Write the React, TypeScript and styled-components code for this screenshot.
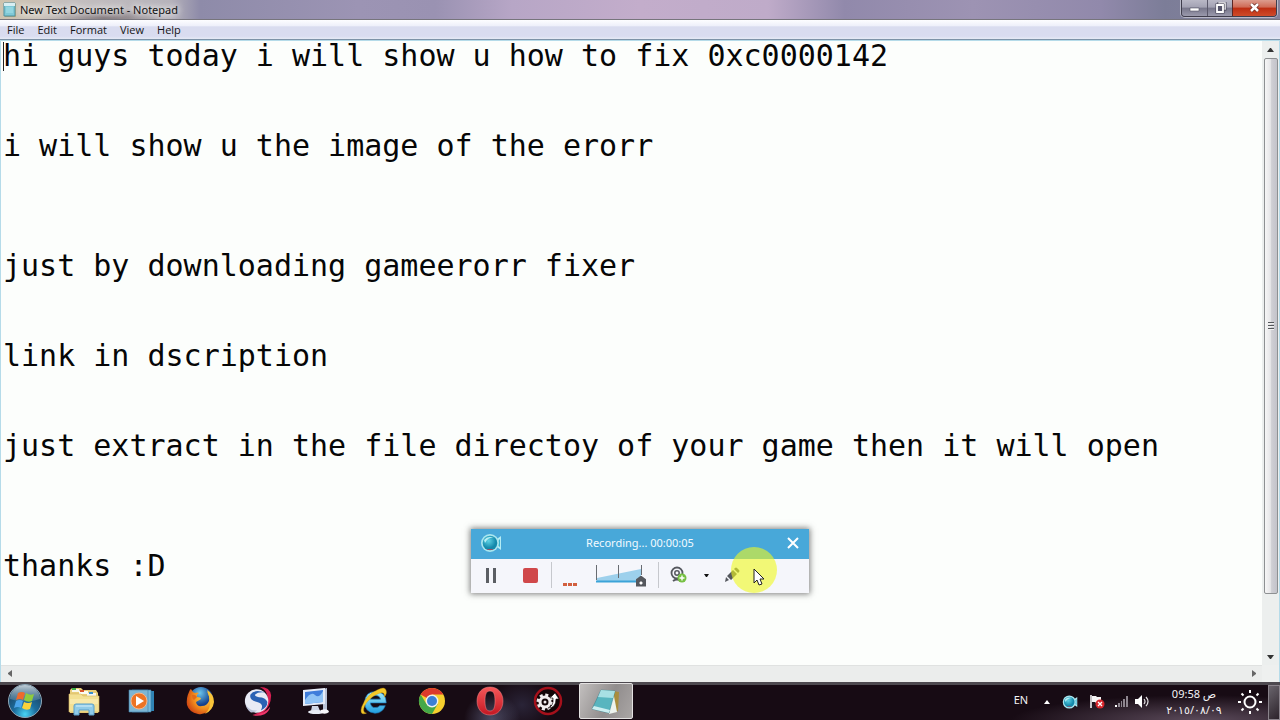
import React from "react";
import styled, { createGlobalStyle } from "styled-components";

const GlobalStyle = createGlobalStyle`
  * { box-sizing: border-box; }
  body { margin: 0; background: #160a12; font-family: "Noto Sans", "Open Sans", sans-serif; }
  button, input, textarea { font: inherit; margin: 0; }
`;

const Desktop = styled.div`
  position: relative;
  display: flex;
  flex-direction: column;
  height: 100vh;
  overflow: hidden;
`;

/* ---------- Notepad window ---------- */

const Window = styled.section`
  flex: 1;
  min-height: 0;
  display: flex;
  flex-direction: column;
`;

const TitleBar = styled.header`
  flex: none;
  display: flex;
  align-items: center;
  height: 20px;
  padding: 0 3px 0 3px;
  border-bottom: 1px solid #77757c;
  background:
    radial-gradient(ellipse 60px 10px at 105px 18px, rgba(70, 55, 60, 0.55), transparent),
    linear-gradient(90deg, #cfc3ae 0, #c4bfbf 70px, #b6b3bb 170px, #8e8ba9 200px, #9c94b4 28%, #9a92b2 34%, #b7a6c6 40%, #c3adcb 50%, #bfabc9 60%, #9189ab 66%, #9d93b3 76%, #9189ab 86%, #7c7d98 91%, #85839c 100%);
`;

const Title = styled.h1`
  flex: 1;
  margin: 0;
  padding-left: 3px;
  font: 400 11px/18px "Noto Sans", sans-serif;
  color: #111;
  text-shadow: 0 0 6px #fff, 0 0 8px #fff;
`;

const CaptionButtons = styled.div`
  align-self: flex-start;
  display: flex;
  height: 17px;
  border: 1px solid #3f3d4c;
  border-top: 0;
  border-radius: 0 0 4px 4px;
  overflow: hidden;
  box-shadow: 0 0 0 1px rgba(255, 255, 255, 0.45);
`;

const CaptionButton = styled.button<{ $close?: boolean }>`
  display: grid;
  place-items: center;
  width: ${(p) => (p.$close ? 44 : 25)}px;
  padding: 0;
  border: 0;
  border-left: 1px solid ${(p) => (p.$close ? "#5c2724" : "#5a586a")};
  background: ${(p) =>
    p.$close
      ? "linear-gradient(#dc9c8e 0, #cf6a55 45%, #bd2d12 50%, #cf4b2a 100%)"
      : "linear-gradient(#b9b8c6 0, #a3a2b3 45%, #77768a 50%, #9a99ac 100%)"};
  &:first-child { border-left: 0; }
`;

const MenuBar = styled.nav`
  flex: none;
  display: flex;
  align-items: center;
  gap: 13px;
  height: 20px;
  padding-left: 7px;
  border-bottom: 1px solid #7d93a8;
  background: linear-gradient(#fdfdff 0, #eef0fa 30%, #d9dcef 36%, #d9dcf0 85%, #e6eaf5 100%);
`;

const MenuItem = styled.button`
  padding: 0;
  border: 0;
  background: none;
  font-family: "Open Sans", sans-serif;
  font-size: 11px;
  line-height: 18px;
  color: #151515;
`;

const EditorGrid = styled.div`
  flex: 1;
  min-height: 0;
  display: grid;
  grid-template-columns: 1fr 17px;
  grid-template-rows: 1fr 17px;
  border: 1px solid #b5dbe9;
  border-width: 1px 1px 0;
  background: #eef0ef;
`;

const Editor = styled.textarea`
  display: block;
  width: 100%;
  height: 100%;
  padding: 0 0 0 2px;
  border: 0;
  outline: 0;
  resize: none;
  overflow: hidden;
  background: #fcfefc;
  color: #060606;
  font: 400 30px/30px "DejaVu Sans Mono", monospace;
  white-space: pre;
`;

const EditorPane = styled.div`
  position: relative;
  min-height: 0;
`;

const Caret = styled.span`
  position: absolute;
  left: 2px;
  top: 1px;
  width: 1px;
  height: 29px;
  background: #222;
`;

const VScroll = styled.div`
  display: flex;
  flex-direction: column;
  align-items: center;
  background: #ecefee;
`;

const HScroll = styled.div`
  display: flex;
  justify-content: space-between;
  padding: 0 1px;
  border-top: 1px solid #e0e2e1;
  background: #ebedec;
`;

const ScrollArrow = styled.button`
  flex: none;
  display: grid;
  place-items: center;
  width: 15px;
  height: 16px;
  padding: 0 0 2px;
  border: 0;
  background: none;
`;

const VScrollArrow = styled(ScrollArrow)`
  height: 17px;
  padding: 0;
`;

const ScrollThumb = styled.div`
  flex: 537;
  display: flex;
  flex-direction: column;
  align-items: center;
  justify-content: center;
  gap: 1px;
  width: 14px;
  border: 1px solid #8d9092;
  border-radius: 2px;
  background: linear-gradient(90deg, #f6f6f6, #e6e6e8 45%, #cfcfd4 55%, #c3c3ca);
`;

const ScrollSpace = styled.div`
  flex: 54;
`;

const GripLine = styled.span`
  width: 6px;
  height: 2px;
  background: #55585c;
  border-bottom: 1px solid #f0f0f0;
`;

/* ---------- Recorder ---------- */

const Recorder = styled.section`
  position: absolute;
  left: calc(50% - 169px);
  bottom: 127px;
  width: 338px;
  box-shadow: 0 0 6px 1px rgba(40, 40, 40, 0.6);
  background: #f5f6fb;
`;

const RecorderHead = styled.header`
  display: grid;
  grid-template-columns: 40px 1fr 32px;
  align-items: center;
  justify-items: center;
  height: 30px;
  padding-bottom: 2px;
  background: #48a8d9;
`;

const RecorderTitle = styled.h2`
  margin: 0;
  padding-right: 8px;
  font: 400 11px/16px "Noto Sans", sans-serif;
  color: #f2faff;
`;

const RecorderBody = styled.div`
  display: flex;
  align-items: center;
  height: 34px;
  padding-bottom: 2px;
`;

const Tool = styled.button<{ $w: number }>`
  display: grid;
  place-items: center;
  width: ${(p) => p.$w}px;
  height: 28px;
  padding: 0;
  border: 0;
  background: none;
`;

const Divider = styled.span`
  width: 1px;
  height: 26px;
  background: #c6c8cd;
`;

const Levels = styled.div`
  display: flex;
  align-items: flex-end;
  gap: 1px;
  width: 44px;
  height: 22px;
  padding-left: 11px;
`;

const Level = styled.span`
  width: 4px;
  height: 3px;
  background: #d2603f;
`;

const Volume = styled.label`
  display: grid;
  width: 52px;
  height: 24px;
  margin-right: 10px;
  & > * { grid-area: 1 / 1; }
`;

const VolumeRange = styled.input`
  align-self: end;
  width: 50px;
  height: 12px;
  appearance: none;
  background: none;
  &::-webkit-slider-thumb {
    appearance: none;
    width: 10px;
    height: 11px;
    background: radial-gradient(circle at 5px 7px, #fff 0 1px, #55585e 2px);
    clip-path: polygon(50% 0, 100% 35%, 100% 100%, 0 100%, 0 35%);
  }
`;

const Pointer = styled.div`
  position: absolute;
  left: calc(50% + 91px);
  bottom: 127px;
  width: 46px;
  height: 46px;
  border-radius: 50%;
  background: rgba(240, 250, 30, 0.6);
  pointer-events: none;
  & > svg { position: absolute; left: 22px; top: 21px; }
`;

/* ---------- Taskbar ---------- */

const Taskbar = styled.footer`
  flex: none;
  display: flex;
  align-items: flex-start;
  height: 38px;
  padding-top: 1px;
  background:
    linear-gradient(#4d494f, #4d494f) 0 0 / 100% 3px no-repeat,
    radial-gradient(ellipse 28px 26px at 492px 37px, rgba(110, 115, 150, 0.6), transparent),
    radial-gradient(ellipse 30px 26px at 522px 23px, rgba(60, 60, 90, 0.5), transparent),
    radial-gradient(ellipse 190px 26px at calc(100% - 80px) 39px, rgba(110, 92, 110, 0.8), transparent),
    #170b14;
`;

const StartButton = styled.button`
  width: 50px;
  height: 37px;
  padding: 0;
  margin-right: 6px;
  border: 0;
  background: none;
  line-height: 0;
`;

const Tasks = styled.div`
  flex: 1;
  display: flex;
  gap: 4px;
  padding-left: 1px;
`;

const TaskButton = styled.button<{ $active?: boolean }>`
  display: grid;
  place-items: center;
  width: 54px;
  height: 36px;
  padding: 0;
  border: 1px solid ${(p) => (p.$active ? "#e3e1e1" : "transparent")};
  border-radius: 2px;
  background: ${(p) => (p.$active ? "linear-gradient(115deg, #c2bfbe, #918d8d 55%, #aaa6a5)" : "none")};
`;

const Tray = styled.div`
  display: flex;
  align-items: center;
  height: 37px;
  margin-right: 3px;
  color: #f4f2f4;
`;

const TrayButton = styled.button<{ $w: number }>`
  display: grid;
  place-items: center;
  width: ${(p) => p.$w}px;
  height: 32px;
  padding: 0;
  border: 0;
  background: none;
  color: inherit;
  font-size: 11px;
  line-height: 16px;
`;

const Language = styled(TrayButton)`
  padding-bottom: 4px;
`;

const Clock = styled.time`
  width: 82px;
  font: 400 11px/16px "Noto Sans", "DejaVu Sans", sans-serif;
  text-align: center;
  & > span { display: block; white-space: nowrap; }
`;

const ShowDesktop = styled.button`
  width: 12px;
  height: 35px;
  margin-top: 2px;
  padding: 0;
  border: 1px solid #8a838b;
  background: linear-gradient(135deg, #6a646c, #2c232b);
`;

/* ---------- Drawings ---------- */

const NoteIcon = () => (
  <svg width="14" height="16" viewBox="0 0 14 16">
    <path d="M2 2h11v13H2z" fill="#b9a777" />
    <path d="M1 1h11v13H1z" fill="#7fc9d6" stroke="#4f8f9f" />
    <path d="M1 1h11v3H1z" fill="#d8eef2" />
    <path d="M3 6h7M3 8h7M3 10h7" stroke="#a9e2ea" />
  </svg>
);

const CamIcon = ({ size }: { size: number }) => (
  <svg width={size} height={size} viewBox="0 0 22 22">
    <defs>
      <radialGradient id="lens" cx="40%" cy="35%">
        <stop offset="0" stopColor="#5fd3e6" />
        <stop offset="1" stopColor="#1489ab" />
      </radialGradient>
    </defs>
    <path d="M14 9l7-5v14l-7-5z" fill="#b4ecf4" />
    <path d="M17 10l3-3v8l-3-2z" fill="#3cb3cf" />
    <circle cx="10" cy="11" r="9" fill="#a9e6ef" />
    <circle cx="10" cy="11" r="7.300" fill="url(#lens)" />
    <path d="M4 8q4-5 10-2-6-1-9 5z" fill="#b9eff5" />
    <path d="M6 17q4 2 8 0z" fill="#a8465c" />
  </svg>
);

const StartOrb = () => (
  <svg width="36" height="35" viewBox="0 0 36 35">
    <defs>
      <radialGradient id="orb" cx="50%" cy="90%" r="85%">
        <stop offset="0" stopColor="#48d4f4" />
        <stop offset=".4" stopColor="#1c6d9e" />
        <stop offset="1" stopColor="#1b3954" />
      </radialGradient>
      <linearGradient id="orbGloss" x2="0" y2="1">
        <stop offset="0" stopColor="#dfeaf0" stopOpacity=".85" />
        <stop offset="1" stopColor="#8fb2c4" stopOpacity=".25" />
      </linearGradient>
    </defs>
    <circle cx="18" cy="17" r="16.500" fill="url(#orb)" stroke="#8fa9b8" />
    <path d="M3 15a15 14 0 0 1 30 0q-15 5-30 0z" fill="url(#orbGloss)" />
    <path d="M11 9q4-2 7 0l-2 7q-3-2-7 0z" fill="#ee6a2c" />
    <path d="M19 9q4 3 8 1l-2 7q-4 2-8-1z" fill="#8fcc3d" />
    <path d="M9 17q4-2 7 0l-2 7q-3-2-7 0z" fill="#4ba5ea" />
    <path d="M17 18q4 2 8 0l-2 7q-4 2-8-1z" fill="#fbd23a" />
  </svg>
);

const FolderIcon = () => (
  <svg width="32" height="30" viewBox="0 0 32 30">
    <path d="M2 4l2-2h9l2 2h13l2 3v20H2z" fill="#e8cd79" />
    <path d="M4 3h7v3H4z" fill="#f8f6ea" /><path d="M4 2h4v2H4z" fill="#3fae49" />
    <path d="M11 5h9v3h-9z" fill="#fbfaf1" /><path d="M12 4h4v2h-4z" fill="#d9542b" />
    <path d="M19 7h9v3h-9z" fill="#f6f6f0" /><path d="M21 6h4v2h-4z" fill="#388fd0" />
    <path d="M1 8h12l2 2h16v16H1z" fill="#f3e093" stroke="#d8ba62" strokeWidth=".6" />
    <path d="M2 13h28v5H2z" fill="#f9ecb4" opacity=".7" />
    <path d="M6 29V20q0-2 2-2h16q2 0 2 2v9h-5v-5H11v5z" fill="#8fcbe8" stroke="#5a9fc8" />
    <path d="M8 20h16" stroke="#d6f0fb" />
  </svg>
);

const MediaIcon = () => (
  <svg width="28" height="28" viewBox="0 0 28 28">
    <path d="M7 4h19v20H7z" fill="#2f83b4" />
    <path d="M4 3h19v22H4z" fill="#78b9dc" stroke="#397fa9" strokeWidth=".6" />
    <path d="M1 3h19v22H1z" fill="#7db6d4" stroke="#3c7ca6" strokeWidth=".6" />
    <circle cx="11" cy="14" r="8" fill="#ec7324" stroke="#f6b588" />
    <path d="M8 9l8 5-8 5z" fill="#fff" />
  </svg>
);

const FirefoxIcon = () => (
  <svg width="30" height="30" viewBox="0 0 30 30">
    <defs>
      <radialGradient id="fx" cx="70%" cy="35%" r="75%">
        <stop offset="0" stopColor="#ffd84a" />
        <stop offset=".6" stopColor="#f08a1d" />
        <stop offset="1" stopColor="#cf4412" />
      </radialGradient>
      <radialGradient id="globe" cx="45%" cy="25%">
        <stop offset="0" stopColor="#6cc6ee" />
        <stop offset="1" stopColor="#15408c" />
      </radialGradient>
    </defs>
    <circle cx="16" cy="13" r="12" fill="url(#globe)" />
    <path d="M4 6q1-3 2-3 1 3 4 4 2-1 4 0-3 2-2 4 4 0 4 2-3 2-5 3 1 5 6 4 5 0 7-5 1-5-2-9 5 2 6 8 1 6-4 11-5 4-11 3Q4 26 2 19q-1-7 2-13z" fill="url(#fx)" />
    <path d="M22 4q7 4 7 12-1 8-9 12 6-6 5-13-1-6-3-11z" fill="#f9c43a" />
    <path d="M7 9q3-1 5 2l-3 3q-2-1-2-5z" fill="#e36a19" />
  </svg>
);

const SwirlIcon = () => (
  <svg width="30" height="30" viewBox="0 0 32 32">
    <path d="M18 1q11 0 12 9 0 13-11 20l-9 1q15-5 16-17Q27 5 18 1z" fill="#d81f52" />
    <circle cx="14.500" cy="16" r="12.500" fill="#e9ebf5" />
    <path d="M24 7Q12 3 8 9q-2 6 7 8 8 2 4 9 7-3 7-9-2-5-9-5-5-1-4-3 3-3 11-2z" fill="#2b62b4" />
    <path d="M3 20q4 7 12 6-4 3-7 2-4-3-5-8z" fill="#b9bfd6" />
    <path d="M10 31q13-1 19-9-1 5-6 8-7 3-13 1z" fill="#f0356a" />
  </svg>
);

const ComputerIcon = () => (
  <svg width="30" height="30" viewBox="0 0 30 30">
    <path d="M22 3l4-1v24l-4 1z" fill="#b9c2d6" />
    <path d="M2 4l22-2v16L2 20z" fill="#e6ecf8" />
    <path d="M4 6l18-2v12L4 18z" fill="#3f7ddb" />
    <path d="M4 14q6-9 10-5t8-4v11L4 18z" fill="#8fc3f6" />
    <path d="M11 20h6l2 5h-9z" fill="#cfd6e6" />
    <ellipse cx="15" cy="26" rx="8" ry="2" fill="#e9edf6" />
    <path d="M20 24q7-2 8 2-3 3-8 1z" fill="#f6f7fb" />
  </svg>
);

const IEIcon = () => (
  <svg width="30" height="30" viewBox="0 0 32 32">
    <defs>
      <linearGradient id="ie" x2="0" y2="1">
        <stop offset="0" stopColor="#a5ecfb" />
        <stop offset="1" stopColor="#1f9fe0" />
      </linearGradient>
    </defs>
    <path d="M29 18H12q1 5 5 5 4 0 5-2h6q-3 8-11 8Q6 28 6 17 7 6 17 6q12 0 12 12zM23 14q-1-4-5-4-5 0-6 4z" fill="url(#ie)" stroke="#1d7fc0" strokeWidth=".7" />
    <path d="M8 29Q0 32 3 22 8 9 20 4q8-4 9 1 1 3-2 7 1-7-6-4Q11 12 6 21q-3 7 2 8z" fill="#f5c928" stroke="#c99a14" strokeWidth=".4" />
  </svg>
);

const ChromeIcon = () => (
  <svg width="28" height="28" viewBox="0 0 28 28">
    <circle cx="14" cy="14" r="13" fill="#f6cf2e" />
    <path d="M14 14L2.700 7.500A13 13 0 0 1 25.300 7.500H14z" fill="#dc3a2c" />
    <path d="M14 14l5.600 3.300L14 27A13 13 0 0 1 2.700 7.500L8.400 17z" fill="#44a848" />
    <circle cx="14" cy="14" r="6.400" fill="#f1f1ee" />
    <circle cx="14" cy="14" r="5" fill="#3b7fd4" />
  </svg>
);

const OperaIcon = () => (
  <svg width="28" height="30" viewBox="0 0 28 30">
    <defs>
      <linearGradient id="op" x2="0" y2="1">
        <stop offset="0" stopColor="#f5585a" />
        <stop offset="1" stopColor="#c41722" />
      </linearGradient>
    </defs>
    <path fillRule="evenodd" d="M14 1c8 0 13 6 13 14s-5 14-13 14S1 23 1 15 6 1 14 1zm0 4c-4 0-5 4-5 10s1 10 5 10 5-4 5-10-1-10-5-10z" fill="url(#op)" stroke="#f0898a" strokeWidth=".5" />
  </svg>
);

const GearIcon = () => (
  <svg width="30" height="30" viewBox="0 0 30 30">
    <circle cx="15" cy="15" r="13" fill="#120507" stroke="#a5101b" strokeWidth="2.500" />
    <circle cx="12" cy="16" r="5" fill="none" stroke="#f1eded" strokeWidth="3" />
    <circle cx="12" cy="16" r="7" fill="none" stroke="#f1eded" strokeWidth="3" strokeDasharray="3 2.500" />
    <circle cx="12" cy="16" r="1.500" fill="#f1eded" />
    <path d="M15 22q6-2 5-10h-3l5-5 4 6h-3q0 9-8 9z" fill="#fff" stroke="#120507" strokeWidth=".6" />
  </svg>
);

const NotepadTaskIcon = () => (
  <svg width="30" height="27" viewBox="0 0 30 27">
    <path d="M22 3l6 1-1 19-6 2z" fill="#a98d3e" />
    <path d="M22 3l4 21-8 2z" fill="#edf3ee" />
    <path d="M10 2l14 1-6 22L1 21z" fill="#58b5bf" stroke="#357e8a" strokeWidth=".5" />
    <path d="M10 2l14 1-2 7-15-1z" fill="#a8e0e4" />
    <path d="M1 21l17 4 1-3-16-4z" fill="#cbeef0" />
  </svg>
);

const PLAIN_TASKS: [string, React.ReactNode][] = [
  ["Windows Explorer", <FolderIcon />],
  ["Windows Media Player", <MediaIcon />],
  ["Firefox", <FirefoxIcon />],
  ["Browser", <SwirlIcon />],
  ["Computer", <ComputerIcon />],
  ["Internet Explorer", <IEIcon />],
  ["Chrome", <ChromeIcon />],
  ["Opera", <OperaIcon />],
  ["Game tool", <GearIcon />],
];

const DOCUMENT = [
  "hi guys today i will show u how to fix 0xc0000142",
  "", "",
  "i will show u the image of the erorr",
  "", "", "",
  "just by downloading gameerorr fixer",
  "", "",
  "link in dscription",
  "", "",
  "just extract in the file directoy of your game then it will open",
  "", "", "",
  "thanks :D",
].join("\n");

function Notepad() {
  return (
    <Window aria-label="Notepad">
      <TitleBar>
        <NoteIcon />
        <Title>New Text Document - Notepad</Title>
        <CaptionButtons>
          <CaptionButton aria-label="Minimize">
            <svg width="13" height="12" viewBox="0 0 13 12"><path d="M2 6h9v3H2z" fill="#fff" stroke="#555466" strokeWidth=".6" /></svg>
          </CaptionButton>
          <CaptionButton aria-label="Restore">
            <svg width="13" height="13" viewBox="0 0 13 13">
              <path d="M5 1h6v6H5z" fill="none" stroke="#444355" strokeWidth="3" />
              <path d="M5 1h6v6H5z" fill="none" stroke="#fff" strokeWidth="1.500" />
              <path d="M3 3h6v7H3z" fill="#77768a" stroke="#444355" strokeWidth="3" />
              <path d="M3 3h6v7H3z" fill="#55546a" stroke="#fff" strokeWidth="1.800" />
            </svg>
          </CaptionButton>
          <CaptionButton $close aria-label="Close">
            <svg width="13" height="11" viewBox="0 0 13 11">
              <path d="M3 1l7 7M10 1l-7 7" stroke="#6b2a22" strokeWidth="4" />
              <path d="M3 1l7 7M10 1l-7 7" stroke="#fff" strokeWidth="2.500" />
            </svg>
          </CaptionButton>
        </CaptionButtons>
      </TitleBar>
      <MenuBar>
        {["File", "Edit", "Format", "View", "Help"].map((name) => (
          <MenuItem key={name}>{name}</MenuItem>
        ))}
      </MenuBar>
      <EditorGrid>
        <EditorPane>
          <Editor aria-label="Document text" spellCheck={false} defaultValue={DOCUMENT} />
          <Caret />
        </EditorPane>
        <VScroll>
          <VScrollArrow aria-label="Scroll up">
            <svg width="7" height="4" viewBox="0 0 7 4"><path d="M0 4l3-4h1l3 4z" fill="#333" /></svg>
          </VScrollArrow>
          <ScrollThumb><GripLine /><GripLine /><GripLine /></ScrollThumb>
          <ScrollSpace />
          <VScrollArrow aria-label="Scroll down">
            <svg width="7" height="4" viewBox="0 0 7 4"><path d="M0 0l3 4h1l3-4z" fill="#333" /></svg>
          </VScrollArrow>
        </VScroll>
        <HScroll>
          <ScrollArrow aria-label="Scroll left">
            <svg width="4" height="7" viewBox="0 0 4 7"><path d="M4 0L0 3v1l4 3z" fill="#666" /></svg>
          </ScrollArrow>
          <ScrollArrow aria-label="Scroll right">
            <svg width="4" height="7" viewBox="0 0 4 7"><path d="M0 0l4 3v1L0 7z" fill="#666" /></svg>
          </ScrollArrow>
        </HScroll>
      </EditorGrid>
    </Window>
  );
}

function RecorderPanel() {
  return (
    <Recorder aria-label="Screen recorder">
      <RecorderHead>
        <CamIcon size={22} />
        <RecorderTitle>Recording... 00:00:05</RecorderTitle>
        <Tool $w={30} aria-label="Close recorder">
          <svg width="12" height="12" viewBox="0 0 12 12"><path d="M1 1l10 10M11 1L1 11" stroke="#fff" strokeWidth="2" /></svg>
        </Tool>
      </RecorderHead>
      <RecorderBody>
        <Tool $w={40} aria-label="Pause">
          <svg width="10" height="15" viewBox="0 0 10 15"><path d="M0 0h3v15H0zM7 0h3v15H7z" fill="#5b5e63" /></svg>
        </Tool>
        <Tool $w={40} aria-label="Stop">
          <svg width="16" height="15" viewBox="0 0 16 15"><rect width="15" height="15" rx="2" fill="#d0484a" /></svg>
        </Tool>
        <Divider />
        <Levels><Level /><Level /><Level /></Levels>
        <Volume aria-label="Microphone volume">
          <svg width="52" height="24" viewBox="0 0 52 24">
            <path d="M1 15L45 6v12H1z" fill="#9dd0ec" />
            <path d="M0 18.500h45" stroke="#3ba3d8" strokeWidth="2" />
            <path d="M.5 2v15M22.500 2v13M45.500 2v10" stroke="#686c72" strokeWidth="1" />
          </svg>
          <VolumeRange type="range" min="0" max="100" defaultValue="100" />
        </Volume>
        <Divider />
        <Tool $w={40} aria-label="Add webcam">
          <svg width="18" height="18" viewBox="0 0 18 18">
            <circle cx="7" cy="7" r="5.500" fill="none" stroke="#55585e" strokeWidth="1.800" />
            <circle cx="7" cy="7" r="2.200" fill="none" stroke="#55585e" strokeWidth="1.500" />
            <path d="M3 15q4-3 8 0" fill="none" stroke="#55585e" strokeWidth="2" />
            <circle cx="12" cy="12" r="4.500" fill="#76c043" />
            <path d="M12 9.500v5M9.500 12h5" stroke="#fff" strokeWidth="1.400" />
          </svg>
        </Tool>
        <Tool $w={14} aria-label="Webcam options">
          <svg width="5" height="3" viewBox="0 0 5 3"><path d="M0 0h5L3 3H2z" fill="#111" /></svg>
        </Tool>
        <Tool $w={38} aria-label="Draw">
          <svg width="16" height="16" viewBox="0 0 16 16">
            <path d="M1 15l1-5 3 3zM3 9l6-6 4 4-6 6zM10 2l1-1q1-1 2 0l2 2q1 1 0 2l-1 1z" fill="#55585e" />
          </svg>
        </Tool>
      </RecorderBody>
    </Recorder>
  );
}

export default function App() {
  return (
    <Desktop>
      <GlobalStyle />
      <Notepad />
      <Taskbar>
        <StartButton aria-label="Start"><StartOrb /></StartButton>
        <Tasks>
          {PLAIN_TASKS.map(([name, icon]) => (
            <TaskButton key={name} aria-label={name}>{icon}</TaskButton>
          ))}
          <TaskButton $active aria-label="Notepad"><NotepadTaskIcon /></TaskButton>
        </Tasks>
        <Tray>
          <Language $w={34}>EN</Language>
          <TrayButton $w={18} aria-label="Show hidden icons">
            <svg width="6" height="4" viewBox="0 0 6 4"><path d="M0 4l3-4 3 4z" fill="#fff" /></svg>
          </TrayButton>
          <TrayButton $w={28} aria-label="Recorder"><CamIcon size={16} /></TrayButton>
          <TrayButton $w={27} aria-label="Action center">
            <svg width="15" height="14" viewBox="0 0 15 14">
              <path d="M1 0v13" stroke="#fff" strokeWidth="1.500" />
              <path d="M2 1h4l1 1h4v6H6L5 7H2z" fill="#f4f4f4" />
              <circle cx="10" cy="9" r="4.500" fill="#d8262c" />
              <path d="M8 7l4 4M12 7l-4 4" stroke="#fff" strokeWidth="1.300" />
            </svg>
          </TrayButton>
          <TrayButton $w={20} aria-label="Network">
            <svg width="13" height="11" viewBox="0 0 13 11">
              <path d="M0 9h2v2H0z" fill="#fff" />
              <path d="M3 7h2v4H3zM6 5h1v6H6zM8 3h2v8H8zM11 0h2v11h-2z" fill="#8e868f" />
            </svg>
          </TrayButton>
          <TrayButton $w={22} aria-label="Volume">
            <svg width="14" height="13" viewBox="0 0 14 13">
              <path d="M0 4h3l4-4v13L3 9H0z" fill="#fff" />
              <path d="M9 4q2 2.500 0 5M11 2q4 4.500 0 9" fill="none" stroke="#e5e2e5" strokeWidth="1.200" />
            </svg>
          </TrayButton>
          <Clock dateTime="2015-08-09T09:58">
            <span>09:58 ص</span>
            <span>٢٠١٥/٠٨/٠٩</span>
          </Clock>
          <TrayButton $w={30} aria-label="Weather">
            <svg width="26" height="26" viewBox="0 0 26 26" fill="none" stroke="#fff" strokeWidth="2">
              <circle cx="13" cy="13" r="5.500" />
              <path d="M13 1v3M13 22v3M1 13h3M22 13h3M4.500 4.500l2 2M19.500 19.500l2 2M4.500 21.500l2-2M19.500 6.500l2-2" />
            </svg>
          </TrayButton>
        </Tray>
        <ShowDesktop aria-label="Show desktop" />
      </Taskbar>
      <RecorderPanel />
      <Pointer>
        <svg width="12" height="19" viewBox="0 0 12 19">
          <path d="M1 1v14l3-3 2 5 3-1-2-5h4z" fill="#fff" stroke="#222" />
        </svg>
      </Pointer>
    </Desktop>
  );
}
